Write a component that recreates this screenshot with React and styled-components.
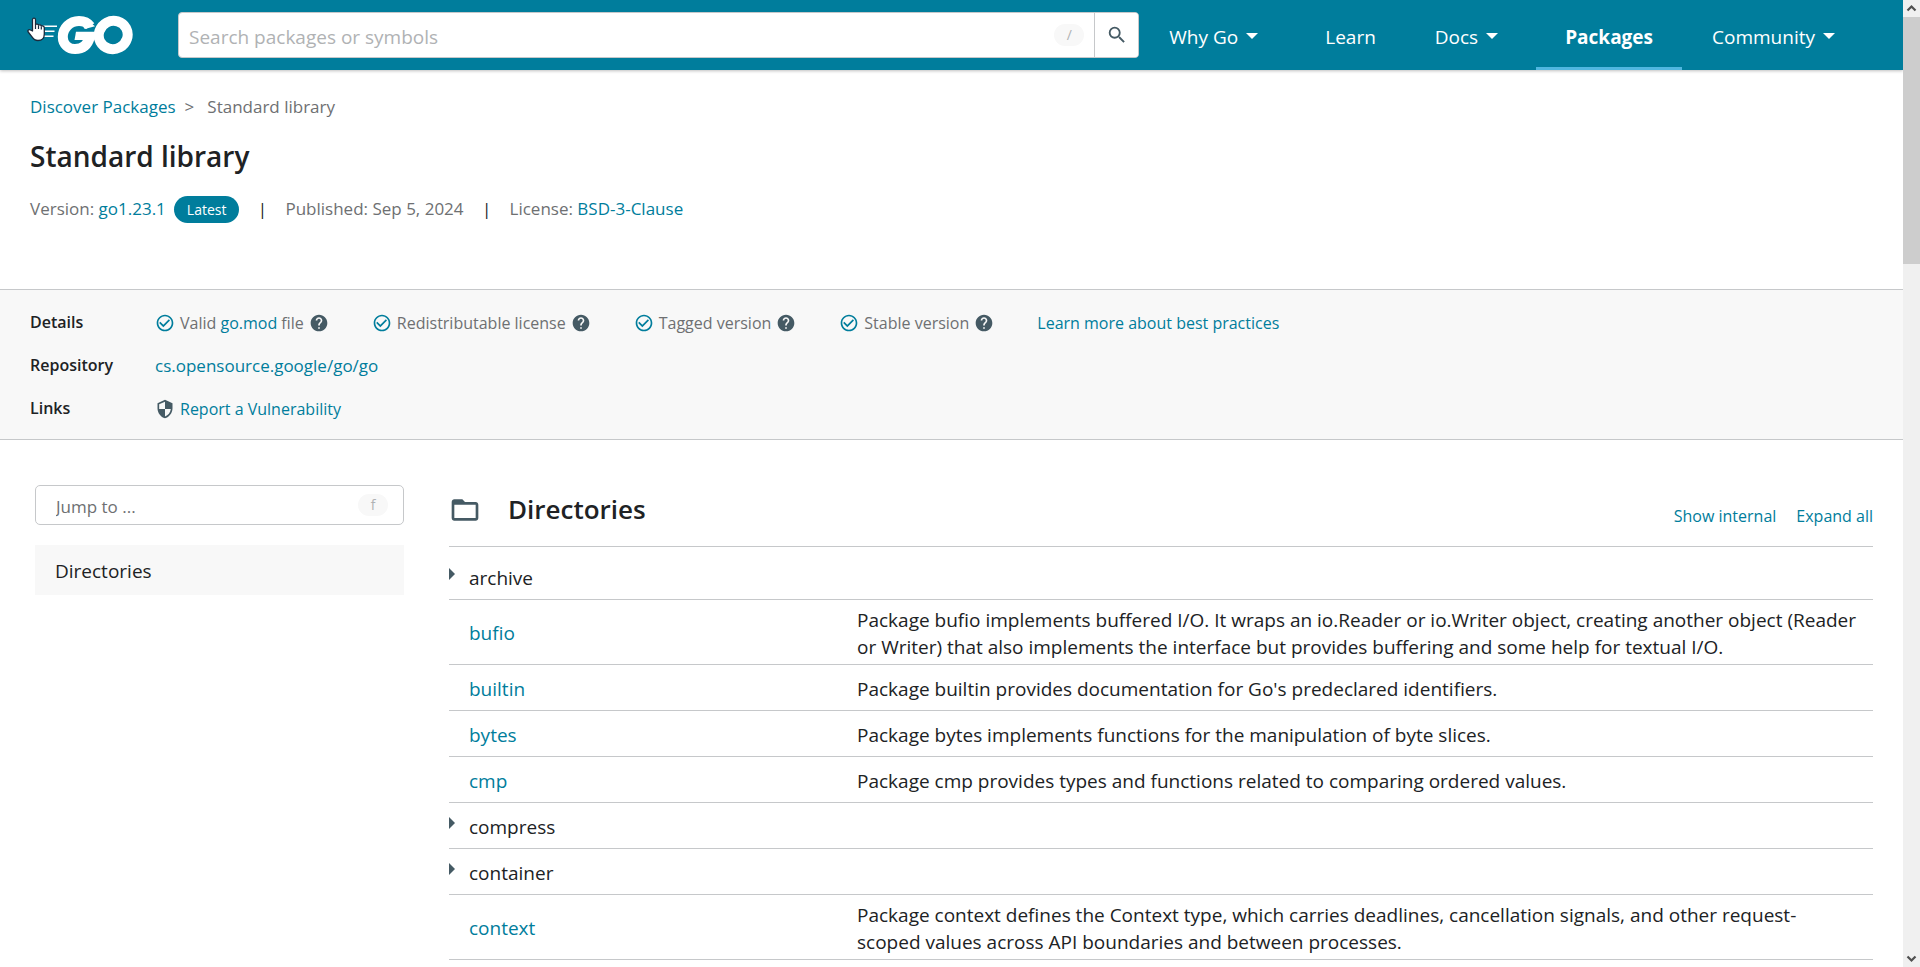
import React from 'react';
import styled, { createGlobalStyle, css } from 'styled-components';
import {
  MdCheckCircleOutline,
  MdFolderOpen,
  MdHelp,
  MdSearch,
  MdSecurity,
} from 'react-icons/md';

const color = {
  teal: '#007d9c',
  accent: '#50b7e0',
  text: '#202224',
  subtle: '#6e7072',
  faint: '#b0b2b4',
  border: '#c6c8ca',
  surface: '#f8f8f8',
  icon: '#455a64',
};

const GlobalStyle = createGlobalStyle`
  *, *::before, *::after { box-sizing: border-box; }
  body {
    margin: 0;
    background: #fff;
    color: ${color.text};
    font-family: 'Open Sans', 'Noto Sans', sans-serif;
    font-size: 19px;
    line-height: 27px;
  }
  h1, h2, p, ul, dl, dd { margin: 0; padding: 0; }
  button, input { font: inherit; color: inherit; }
`;

const Screen = styled.div`
  display: flex;
  height: 100vh;
  overflow: hidden;
`;

const Page = styled.div`
  flex: 1;
  min-width: 0;
  overflow: hidden;
`;

const Link = styled.a`
  color: ${color.teal};
  text-decoration: none;
  &:hover { text-decoration: underline; }
`;

/* Header */

const Header = styled.header`
  display: flex;
  align-items: center;
  height: 70px;
  padding: 0 30px 0 27px;
  background: ${color.teal};
  box-shadow: 0 1px 3px rgba(0, 0, 0, 0.25);
`;

const LogoLink = styled.a`
  position: relative;
  display: flex;
  width: 107px;
  margin-right: 44px;
`;

const Cursor = styled.svg`
  position: absolute;
  left: 0;
  top: 2px;
`;

const SearchForm = styled.form`
  display: flex;
  flex: 1;
  height: 46px;
  border: 1px solid ${color.border};
  border-radius: 4px;
  background: #fff;
  overflow: hidden;
`;

const SearchInput = styled.input`
  flex: 1;
  min-width: 0;
  padding: 4px 10px 0;
  border: 0;
  background: none;
  outline: none;
  &::placeholder { color: ${color.faint}; opacity: 1; }
`;

const KeyHint = styled.kbd`
  align-self: center;
  width: 30px;
  border-radius: 12px;
  background: ${color.surface};
  color: ${color.faint};
  font-family: inherit;
  font-size: 14px;
  line-height: 22px;
  text-align: center;
`;

const SearchHint = styled(KeyHint)`
  margin-right: 10px;
`;

const SearchButton = styled.button`
  display: flex;
  align-items: center;
  justify-content: center;
  width: 44px;
  padding: 0;
  border: 0;
  border-left: 1px solid ${color.border};
  background: #fff;
  color: ${color.icon};
  cursor: pointer;
`;

const Nav = styled.nav`
  display: flex;
  align-self: stretch;
`;

const NavLink = styled.a`
  display: flex;
  align-items: center;
  gap: 8px;
  padding: ${(p) => (p.$menu ? '4px 38px 0 30px' : '4px 29px 0')};
  color: #fff;
  text-decoration: none;
  white-space: nowrap;
  ${(p) =>
    p.$active &&
    css`
      font-weight: 700;
      box-shadow: inset 0 -3px ${color.accent};
    `}
`;

const Caret = styled.span`
  margin-bottom: 3px;
  border: 6px solid transparent;
  border-top-color: #fff;
  border-bottom: 0;
`;

/* Title block */

const Intro = styled.section`
  height: 219px;
  padding: 25px 30px 0;
  color: ${color.subtle};
  font-size: 17px;
  line-height: 24px;
`;

const Breadcrumb = styled.nav`
  display: flex;
  gap: 9px;
`;

const Crumb = styled.span`
  margin-left: 4px;
`;

const Title = styled.h1`
  margin: 17px 0 19px;
  color: ${color.text};
  font-size: 28px;
  line-height: 40px;
  font-weight: 600;
`;

const MetaRow = styled.div`
  display: flex;
  align-items: center;
  height: 28px;
`;

const Badge = styled.span`
  margin-left: 8px;
  padding: 0 13px;
  border-radius: 14px;
  background: ${color.teal};
  color: #fff;
  font-size: 14px;
  line-height: 27px;
`;

const Divider = styled.span`
  width: 46px;
  color: ${color.text};
  text-align: center;
`;

/* Details band */

const Band = styled.section`
  display: grid;
  grid-template-columns: 125px 1fr;
  grid-auto-rows: 43px;
  align-items: center;
  height: 151px;
  padding: 11px 30px 9px;
  border: solid ${color.border};
  border-width: 1px 0;
  background: ${color.surface};
  color: ${color.subtle};
  font-size: 16px;
  line-height: 24px;
`;

const BandLabel = styled.h2`
  padding-bottom: 2px;
  color: ${color.text};
  font-size: 16px;
  font-weight: 600;
`;

const BandValue = styled.div`
  display: flex;
  align-items: center;
  gap: 43px;
`;

const RepoLink = styled(Link)`
  font-size: 17px;
`;

const Check = styled.span`
  display: flex;
  align-items: center;
  gap: 5px;
  white-space: nowrap;
`;

const CheckMark = styled(MdCheckCircleOutline)`
  color: ${color.teal};
`;

const DarkIcon = styled.span`
  display: flex;
  color: ${color.icon};
`;

/* Body */

const Body = styled.div`
  display: grid;
  grid-template-columns: 369px minmax(0, 1fr);
  column-gap: 45px;
  padding: 45px 30px 0 35px;
`;

const JumpBox = styled.label`
  display: flex;
  height: 40px;
  padding: 0 15px 0 20px;
  border: 1px solid ${color.border};
  border-radius: 5px;
  font-size: 17px;
`;

const JumpInput = styled.input`
  flex: 1;
  min-width: 0;
  padding: 2px 0 0;
  border: 0;
  background: none;
  outline: none;
  &::placeholder { color: ${color.subtle}; opacity: 1; }
`;

const SideLink = styled.a`
  display: block;
  margin-top: 20px;
  padding: 13px 20px 10px;
  background: ${color.surface};
  color: ${color.text};
  text-decoration: none;
`;

const DirHeader = styled.div`
  display: flex;
  align-items: center;
  height: 61px;
  padding-bottom: 12px;
  color: ${color.icon};
`;

const DirTitle = styled.h2`
  flex: 1;
  margin-left: 27px;
  padding-bottom: 2px;
  color: ${color.text};
  font-size: 26px;
  line-height: 36px;
  font-weight: 600;
`;

const DirActions = styled.div`
  display: flex;
  gap: 20px;
  padding-top: 14px;
`;

const TextButton = styled.button`
  padding: 0;
  border: 0;
  background: none;
  color: ${color.teal};
  font-size: 16px;
  cursor: pointer;
`;

const Table = styled.table`
  width: 100%;
  border-collapse: collapse;
  table-layout: fixed;
  border-bottom: 1px solid ${color.border};
`;

const Row = styled.tr`
  height: ${(p) => (p.$first ? 53 : 46)}px;
  border-top: 1px solid ${color.border};
`;

const NameCell = styled.td`
  width: 408px;
  padding: ${(p) => (p.$first ? '11px 0 0' : '3px 0 0')};
  vertical-align: middle;
`;

const DescCell = styled.td`
  padding: 7px 16px 3px 0;
`;

const NameLink = styled(Link)`
  margin-left: 20px;
`;

const Toggle = styled.button`
  display: flex;
  align-items: center;
  padding: 0;
  border: 0;
  background: none;
  cursor: pointer;
`;

const Arrow = styled.span`
  margin: 0 14px 9px 0;
  border: 6px solid transparent;
  border-left-color: ${color.icon};
  border-right: 0;
`;

/* Scroll bar */

const ScrollTrack = styled.div`
  display: flex;
  flex-direction: column;
  width: 17px;
  background: #f0f0f0;
`;

const ScrollButton = styled.button`
  display: flex;
  align-items: center;
  justify-content: center;
  width: 17px;
  height: 17px;
  padding: 0;
  border: 0;
  background: none;
`;

const ScrollSpace = styled.div`
  flex: 1;
`;

const ScrollThumb = styled.div`
  height: 247px;
  background: #cdcdcd;
`;

const navItems = [
  { label: 'Why Go', menu: true },
  { label: 'Learn' },
  { label: 'Docs', menu: true },
  { label: 'Packages', active: true },
  { label: 'Community', menu: true },
];

const checks = [
  { id: 'mod', content: <>Valid <Link href="#mod">go.mod</Link> file</> },
  { id: 'license', content: 'Redistributable license' },
  { id: 'tagged', content: 'Tagged version' },
  { id: 'stable', content: 'Stable version' },
];

const directories = [
  { name: 'archive', group: true },
  {
    name: 'bufio',
    text: 'Package bufio implements buffered I/O. It wraps an io.Reader or io.Writer object, creating another object (Reader or Writer) that also implements the interface but provides buffering and some help for textual I/O.',
  },
  { name: 'builtin', text: "Package builtin provides documentation for Go's predeclared identifiers." },
  { name: 'bytes', text: 'Package bytes implements functions for the manipulation of byte slices.' },
  { name: 'cmp', text: 'Package cmp provides types and functions related to comparing ordered values.' },
  { name: 'compress', group: true },
  { name: 'container', group: true },
  {
    name: 'context',
    text: 'Package context defines the Context type, which carries deadlines, cancellation signals, and other request-scoped values across API boundaries and between processes.',
  },
];

function Logo() {
  return (
    <svg width="107" height="40" viewBox="27 15 107 40" role="img" aria-label="Go">
      <g stroke="#fff" strokeWidth="1.6">
        <path d="M43 26.3H57M43 31.2H54.500M43 36.200H53.500" />
      </g>
      <g fill="none" stroke="#fff">
        <ellipse cx="113.200" cy="35" rx="14.600" ry="14" strokeWidth="10" transform="rotate(-28 113.200 35)" />
        <path
          d="M90.200 26.200C87.500 22.300 83.300 21 79 21C70 21 62.800 28 62.800 37C62.800 44.500 68.500 49 75 49C83 49 88 44.500 90 36.500"
          strokeWidth="10"
        />
      </g>
      <path d="M76 31.800H94.500V40H74.500Z" fill="#fff" />
      <path d="M84.800 29L95 26.200L91 23L83 26.500Z" fill="#fff" />
    </svg>
  );
}

function HandCursor() {
  return (
    <Cursor width="19" height="25" viewBox="0 0 19 25" aria-hidden="true">
      <path
        d="M5.500 14V2.500C5.500.6 8.500.6 8.500 2.500V7.500C9.500 6.700 11.200 7 11.500 8.200C12.500 7.500 14 7.900 14.300 9C15.800 8.500 17.300 9.300 17.300 11V17C17.300 21 14.800 23.500 11 23.500C8 23.500 6.300 22 4.800 19.600L1.200 15C.2 13.500 2 12 3.400 13Z"
        fill="#fff"
        stroke="#1b2a3c"
        strokeWidth="1.300"
        strokeLinejoin="round"
      />
      <path d="M8.500 7.500V12M11.500 8.500V12M14.300 9.500V12.500" stroke="#1b2a3c" strokeWidth="1.200" />
    </Cursor>
  );
}

function Chevron({ d }) {
  return (
    <svg width="11" height="9" viewBox="0 0 11 9" aria-hidden="true">
      <path d={d} fill="none" stroke="#505050" strokeWidth="2.200" />
    </svg>
  );
}

export default function App() {
  return (
    <Screen>
      <GlobalStyle />
      <Page>
        <Header>
          <LogoLink href="#home" aria-label="Go home">
            <Logo />
            <HandCursor />
          </LogoLink>
          <SearchForm role="search">
            <SearchInput aria-label="Search packages or symbols" placeholder="Search packages or symbols" />
            <SearchHint>/</SearchHint>
            <SearchButton type="button" aria-label="Search">
              <MdSearch size={22} />
            </SearchButton>
          </SearchForm>
          <Nav aria-label="Main">
            {navItems.map((item) => (
              <NavLink key={item.label} href="#nav" $menu={item.menu} $active={item.active}>
                {item.label}
                {item.menu && <Caret />}
              </NavLink>
            ))}
          </Nav>
        </Header>

        <Intro>
          <Breadcrumb aria-label="Breadcrumb">
            <Link href="#discover">Discover Packages</Link>
            <span>&gt;</span>
            <Crumb>Standard library</Crumb>
          </Breadcrumb>
          <Title>Standard library</Title>
          <MetaRow>
            <span>Version: <Link href="#versions">go1.23.1</Link></span>
            <Badge>Latest</Badge>
            <Divider>|</Divider>
            <span>Published: Sep 5, 2024</span>
            <Divider>|</Divider>
            <span>License: <Link href="#licenses">BSD-3-Clause</Link></span>
          </MetaRow>
        </Intro>

        <Band>
          <BandLabel>Details</BandLabel>
          <BandValue>
            {checks.map((check) => (
              <Check key={check.id}>
                <CheckMark size={20} />
                <span>{check.content}</span>
                <DarkIcon><MdHelp size={20} /></DarkIcon>
              </Check>
            ))}
            <Link href="#practices">Learn more about best practices</Link>
          </BandValue>
          <BandLabel>Repository</BandLabel>
          <BandValue>
            <RepoLink href="#repo">cs.opensource.google/go/go</RepoLink>
          </BandValue>
          <BandLabel>Links</BandLabel>
          <BandValue>
            <Check>
              <DarkIcon><MdSecurity size={20} /></DarkIcon>
              <Link href="#report">Report a Vulnerability</Link>
            </Check>
          </BandValue>
        </Band>

        <Body>
          <aside>
            <JumpBox>
              <JumpInput aria-label="Jump to" placeholder="Jump to ..." />
              <KeyHint>f</KeyHint>
            </JumpBox>
            <SideLink href="#directories">Directories</SideLink>
          </aside>
          <main>
            <DirHeader>
              <MdFolderOpen size={32} />
              <DirTitle>Directories</DirTitle>
              <DirActions>
                <TextButton>Show internal</TextButton>
                <TextButton>Expand all</TextButton>
              </DirActions>
            </DirHeader>
            <Table>
              <tbody>
                {directories.map((dir, i) => (
                  <Row key={dir.name} $first={i === 0}>
                    <NameCell $first={i === 0}>
                      {dir.group ? (
                        <Toggle aria-expanded="false">
                          <Arrow />
                          {dir.name}
                        </Toggle>
                      ) : (
                        <NameLink href="#package">{dir.name}</NameLink>
                      )}
                    </NameCell>
                    <DescCell>{dir.text}</DescCell>
                  </Row>
                ))}
              </tbody>
            </Table>
          </main>
        </Body>
      </Page>
      <ScrollTrack>
        <ScrollButton aria-label="Scroll up"><Chevron d="M1.500 6.500L5.500 2.500L9.500 6.500" /></ScrollButton>
        <ScrollThumb />
        <ScrollSpace />
        <ScrollButton aria-label="Scroll down"><Chevron d="M1.500 2.500L5.500 6.500L9.500 2.500" /></ScrollButton>
      </ScrollTrack>
    </Screen>
  );
}
